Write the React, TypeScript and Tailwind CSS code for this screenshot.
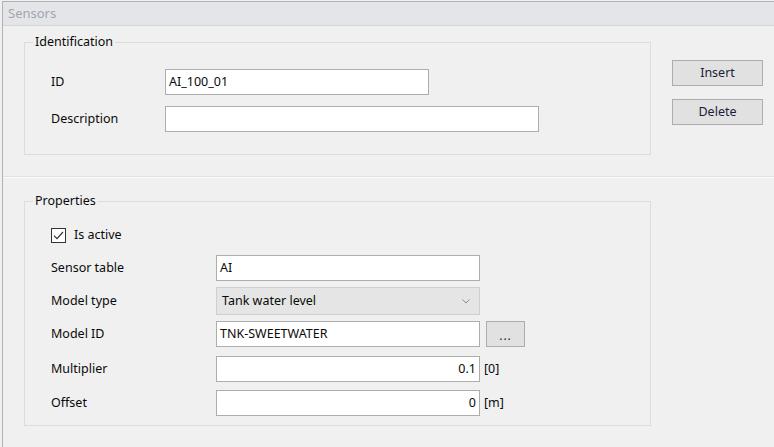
import React from "react";

const font = { fontFamily: '"Noto Sans", "Open Sans", sans-serif' };

function TextBox({ value, width, align = "left" }: { value: string; width: string; align?: "left" | "right" }) {
  return (
    <div
      className={`${width} h-[26px] bg-white border border-[#adadad] flex items-center px-[3px] text-[12.5px] text-[#0a0a0a] ${
        align === "right" ? "justify-end" : "justify-start"
      }`}
    >
      {value}
    </div>
  );
}

function Button({ label, className = "" }: { label: string; className?: string }) {
  return (
    <button
      className={`h-[26px] bg-[#e1e1e1] border border-[#adadad] text-[12.5px] text-[#1c1c3a] flex items-center justify-center pt-[1px] ${className}`}
    >
      {label}
    </button>
  );
}

function Group({ title, children, className = "" }: { title: string; children: React.ReactNode; className?: string }) {
  return (
    <fieldset className={`border border-[#dcdcdc] w-[627px] m-0 p-0 ${className}`}>
      <legend className="ml-[8px] px-[2px] text-[12.5px] leading-[16px] text-[#0a0a0a]">{title}</legend>
      {children}
    </fieldset>
  );
}

function Row({ label, labelWidth, children, className = "" }: { label: string; labelWidth: string; children: React.ReactNode; className?: string }) {
  return (
    <div className={`flex items-center ${className}`}>
      <span className={`${labelWidth} text-[12.5px] text-[#0a0a0a]`}>{label}</span>
      {children}
    </div>
  );
}

export default function App() {
  return (
    <div className="w-[774px] h-[447px] bg-[#f0f0f0] pl-[2px] pt-[1px] overflow-hidden" style={font}>
      <div className="h-full border-l border-t border-[#b2b2b2] flex flex-col">
        {/* title strip */}
        <div className="h-[24px] bg-[#e4e5e9] border-b border-[#d5d6da] flex items-center pl-[5px] text-[13px] text-[#a3a6ab]">
          Sensors
        </div>

        {/* identification section */}
        <div className="h-[151px] flex pl-[21px] pt-[8px] border-b border-[#e2e2e2]">
          <Group title="Identification" className="h-[121px]">
            <div className="pl-[26px] pt-[19px] flex flex-col gap-[11px]">
              <Row label="ID" labelWidth="w-[114px]">
                <TextBox value="AI_100_01" width="w-[264px]" />
              </Row>
              <Row label="Description" labelWidth="w-[114px]">
                <TextBox value="" width="w-[374px]" />
              </Row>
            </div>
          </Group>
          <div className="ml-[21px] pt-[26px] flex flex-col gap-[13px]">
            <Button label="Insert" className="w-[91px]" />
            <Button label="Delete" className="w-[91px]" />
          </div>
        </div>

        {/* properties section */}
        <div className="flex pl-[21px] pt-[15px] border-t border-[#fafafa]">
          <Group title="Properties" className="h-[233px]">
            <div className="pl-[26px] pt-[18px] flex flex-col">
              <div className="flex items-center h-[16px]">
                <span className="w-[15px] h-[15px] border border-[#333] bg-white flex items-center justify-center">
                  <svg width="13" height="13" viewBox="0 0 13 13">
                    <path d="M2 6.6 L5 9.6 L11 3" fill="none" stroke="#333" strokeWidth="1.2" />
                  </svg>
                </span>
                <span className="ml-[8px] text-[12.5px] text-[#0a0a0a]">Is active</span>
              </div>
              <Row label="Sensor table" labelWidth="w-[165px]" className="mt-[12px]">
                <TextBox value="AI" width="w-[264px]" />
              </Row>
              <Row label="Model type" labelWidth="w-[165px]" className="mt-[6px]">
                <div className="w-[264px] h-[28px] bg-[#e5e5e5] border border-[#cfcfcf] flex items-center justify-between pl-[5px] pr-[9px] text-[12.5px] text-[#0a0a0a]">
                  <span>Tank water level</span>
                  <svg width="8" height="5" viewBox="0 0 8 5">
                    <path d="M0.5 0.5 L4 4 L7.5 0.5" fill="none" stroke="#8a8a8a" strokeWidth="1" />
                  </svg>
                </div>
              </Row>
              <Row label="Model ID" labelWidth="w-[165px]" className="mt-[6px]">
                <TextBox value="TNK-SWEETWATER" width="w-[264px]" />
                <button className="ml-[6px] w-[39px] h-[26px] bg-[#e1e1e1] border border-[#adadad] text-[12px] tracking-[1px] text-[#1c1c3a] flex items-end justify-center pb-[4px] leading-none">
                  ...
                </button>
              </Row>
              <Row label="Multiplier" labelWidth="w-[165px]" className="mt-[9px]">
                <TextBox value="0.1" width="w-[264px]" align="right" />
                <span className="ml-[4px] text-[12.5px] text-[#0a0a0a]">[0]</span>
              </Row>
              <Row label="Offset" labelWidth="w-[165px]" className="mt-[8px]">
                <TextBox value="0" width="w-[264px]" align="right" />
                <span className="ml-[4px] text-[12.5px] text-[#0a0a0a]">[m]</span>
              </Row>
            </div>
          </Group>
        </div>
      </div>
    </div>
  );
}
